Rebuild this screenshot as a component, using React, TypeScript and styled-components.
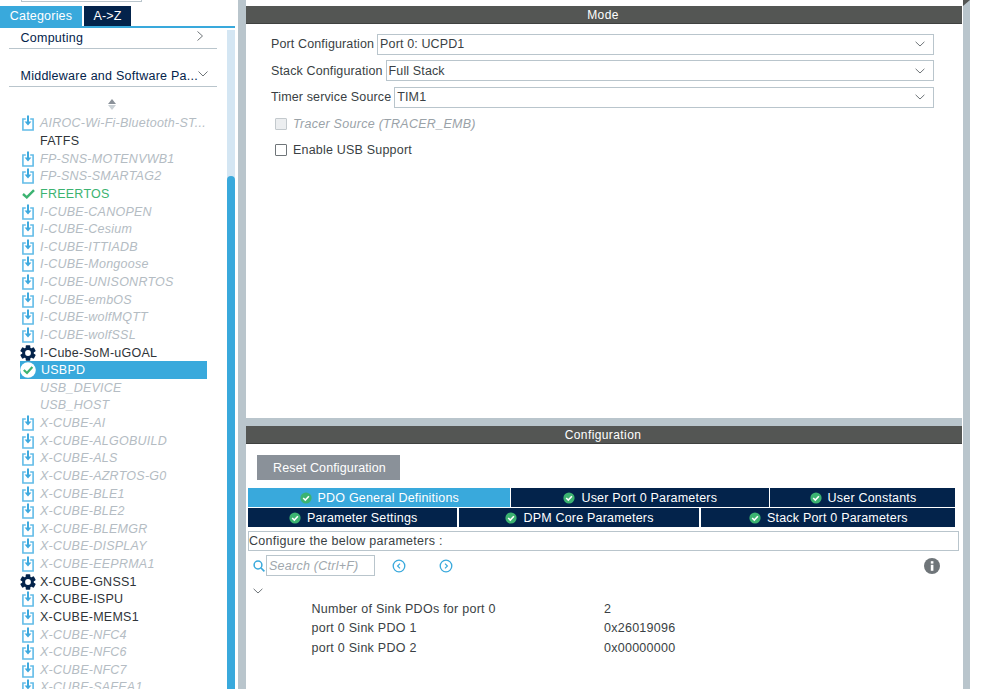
import React from "react";
import styled, { createGlobalStyle } from "styled-components";

const Global = createGlobalStyle`
  html, body { margin: 0; padding: 0; background: #fff; overflow: hidden; }
  body { font-family: "Liberation Sans", Arial, sans-serif; font-size: 12.5px; color: #3a3f44; }
`;

const Page = styled.div`
  display: flex;
  width: 999px;
  height: 689px;
  overflow: hidden;
`;

/* Sidebar */
const Sidebar = styled.aside`
  width: 238px;
  flex: none;
  display: flex;
  flex-direction: column;
`;
const TopField = styled.div`
  height: 1px;
  width: 119px;
  margin: 0 0 4px 21px;
  border: 1px solid #b9c5cc;
  border-top: 0;
`;
const Tabs = styled.div`
  display: flex;
  gap: 2px;
  height: 20px;
`;
const Tab = styled.div<{ $active?: boolean; $w: number }>`
  width: ${(p) => p.$w}px;
  background: ${(p) => (p.$active ? "#39a9dc" : "#03234b")};
  color: #fff;
  font-size: 12.5px;
  letter-spacing: 0.2px;
  display: flex;
  align-items: center;
  justify-content: center;
`;
const BlueLine = styled.div`
  height: 2px;
  width: 235px;
  background: #39a9dc;
`;
const SideBody = styled.div`
  flex: 1;
  display: flex;
  min-height: 0;
  padding-top: 2px;
`;
const SideContent = styled.div`
  width: 227px;
  flex: none;
  overflow: hidden;
`;
const Track = styled.div`
  width: 8px;
  flex: none;
  background: #d4e6f3;
  display: flex;
  flex-direction: column;
`;
const Thumb = styled.div`
  margin-top: 146px;
  flex: 1;
  background: #39a9dc;
  border-radius: 4px 4px 0 0;
`;
const Accordion = styled.div<{ $h: number }>`
  box-sizing: border-box;
  height: ${(p) => p.$h}px;
  width: 208px;
  margin-left: 9px;
  padding: 0 12px 0 11.5px;
  border-bottom: 1.5px solid #b9c5cc;
  display: flex;
  align-items: flex-end;
  justify-content: space-between;
  color: #03234b;
  font-size: 12.5px;
  letter-spacing: 0.25px;
  line-height: 19px;
  white-space: nowrap;
`;
const AccordionIcon = styled.svg`
  flex: none;
  width: 10px;
  height: 10px;
  margin-bottom: 7px;
`;
const SortMark = styled.div`
  height: 17px;
  margin-top: 9px;
  padding-left: 108px;
  display: flex;
  align-items: center;
`;
const List = styled.div`
  display: flex;
  flex-direction: column;
  margin-top: 1.6px;
`;
const Row = styled.div<{ $kind: string; $selected?: boolean }>`
  flex: none;
  box-sizing: border-box;
  height: 17.625px;
  width: 187px;
  margin-left: 20px;
  display: flex;
  align-items: center;
  white-space: nowrap;
  letter-spacing: 0.25px;
  font-size: 12.5px;
  background: ${(p) => (p.$selected ? "#39a9dc" : "transparent")};
  color: ${(p) =>
    p.$selected ? "#fff" : p.$kind === "muted" ? "#b4bcc3" : p.$kind === "green" ? "#3cb371" : "#2f3439"};
  font-style: ${(p) => (p.$kind === "muted" ? "italic" : "normal")};
`;
const RowIcon = styled.span<{ $selected?: boolean }>`
  width: 16px;
  height: 16px;
  margin-right: ${(p) => (p.$selected ? 5 : 4)}px;
  flex: none;
  display: flex;
  align-items: center;
  justify-content: center;
`;

const Sash = styled.div`
  width: 8px;
  flex: none;
  background: #b9c5cc;
`;

/* Main */
const Main = styled.main`
  width: 716px;
  flex: none;
  display: flex;
  flex-direction: column;
`;
const ModePane = styled.section`
  height: 418px;
  flex: none;
  padding-top: 6px;
  box-sizing: border-box;
`;
const HSash = styled.div`
  height: 8px;
  flex: none;
  background: #b9c5cc;
`;
const ConfigPane = styled.section`
  flex: 1;
  min-height: 0;
`;
const PaneHeader = styled.div`
  height: 17px;
  padding-right: 2px;
  background: #545654;
  border-bottom: 1px solid #3f4140;
  color: #fff;
  font-size: 12px;
  letter-spacing: 0.4px;
  display: flex;
  align-items: center;
  justify-content: center;
`;
const Form = styled.div`
  display: flex;
  flex-direction: column;
  padding: 9.5px 28px 0 25px;
`;
const FormRow = styled.div`
  display: flex;
  align-items: center;
  height: 21px;
  margin-bottom: 5.5px;
  white-space: nowrap;
  letter-spacing: 0.13px;
`;
const SelectBox = styled.div`
  flex: 1;
  margin-left: 3px;
  height: 21px;
  box-sizing: border-box;
  border: 1px solid #b9c5cc;
  padding: 0 8px 0 2px;
  display: flex;
  align-items: center;
  justify-content: space-between;
`;
const CheckRow = styled.div<{ $disabled?: boolean }>`
  display: flex;
  align-items: center;
  height: 21px;
  padding-left: 4px;
  margin-bottom: 5.5px;
  gap: 6px;
  letter-spacing: ${(p) => (p.$disabled ? 0.28 : 0.2)}px;
  color: ${(p) => (p.$disabled ? "#9aa2a8" : "#3a3f44")};
  font-style: ${(p) => (p.$disabled ? "italic" : "normal")};
`;
const CheckBox = styled.span<{ $disabled?: boolean }>`
  width: 12px;
  height: 12px;
  box-sizing: border-box;
  border: 1px solid ${(p) => (p.$disabled ? "#c3c9cd" : "#6f7579")};
  border-radius: 1px;
  background: ${(p) => (p.$disabled ? "#eceef0" : "#fff")};
`;

const ConfigBody = styled.div`
  display: flex;
  flex-direction: column;
`;
const ResetButton = styled.button`
  align-self: flex-start;
  width: 143px;
  height: 25px;
  margin: 11px 0 8px 11px;
  padding: 0 0 0 2px;
  border: 0;
  background: #8a9199;
  color: #fff;
  font-family: inherit;
  font-size: 12.5px;
  letter-spacing: 0.12px;
`;
const TabRow = styled.div<{ $mb?: number }>`
  display: flex;
  gap: 1.5px;
  width: 707px;
  height: 19px;
  margin: 0 0 ${(p) => p.$mb ?? 1}px 2px;
`;
const ConfTab = styled.div<{ $w: number; $active?: boolean }>`
  flex: ${(p) => p.$w} 0 0;
  box-sizing: border-box;
  padding-left: 1px;
  background: ${(p) => (p.$active ? "#39a9dc" : "#03234b")};
  color: #fff;
  font-size: 12.5px;
  letter-spacing: 0.2px;
  display: flex;
  align-items: center;
  justify-content: center;
  gap: 6px;
`;
const DescBox = styled.div`
  box-sizing: border-box;
  width: 711px;
  height: 20px;
  margin: 4px 0 4px 2px;
  border: 1px solid #b9c5cc;
  letter-spacing: 0.28px;
  display: flex;
  align-items: center;
`;
const SearchRow = styled.div`
  display: flex;
  align-items: center;
  height: 21px;
  padding-left: 7px;
`;
const SearchInput = styled.div`
  box-sizing: border-box;
  width: 109px;
  height: 21px;
  margin-left: 1px;
  border: 1px solid #b9c5cc;
  padding-left: 2px;
  color: #a0a7ad;
  font-style: italic;
  letter-spacing: 0.25px;
  display: flex;
  align-items: center;
`;
const NavIcon = styled.svg<{ $ml: number }>`
  width: 14px;
  height: 14px;
  margin-left: ${(p) => p.$ml}px;
  flex: none;
`;
const InfoIcon = styled.svg`
  width: 16px;
  height: 16px;
  margin-left: 471px;
  flex: none;
`;
const Chevron = styled.div`
  padding: 7px 0 0 7px;
  height: 13px;
`;
const ParamTable = styled.div`
  margin-top: 3px;
  display: flex;
  flex-direction: column;
`;
const ParamRow = styled.div`
  display: grid;
  grid-template-columns: 292.5px 1fr;
  height: 19.5px;
  padding-left: 65.5px;
  align-items: center;
  letter-spacing: 0.26px;
`;

/* Right edge */
const RightBar = styled.div`
  width: 7px;
  margin-left: 1px;
  flex: none;
  background: #b9c5cc;
`;
const RightBarCap = styled.div`
  height: 6px;
  background: #545654;
  clip-path: polygon(0 0, 100% 0, 0 100%);
`;

/* Icons */
const ChevDown = ({ s = 10, c = "#6f7579" }: { s?: number; c?: string }) => (
  <svg width={s} height={s * 0.6} viewBox="0 0 10 6" fill="none">
    <path d="M0.6 0.8 L5 5 L9.4 0.8" stroke={c} strokeWidth="1" />
  </svg>
);
const Download = () => (
  <svg width="12" height="16" viewBox="0 0 12 16" fill="none">
    <path d="M3.8 4 H0.9 V15 H11.1 V4 H8.2" stroke="#62bce8" strokeWidth="1.6" />
    <path d="M6 0.5 V7" stroke="#3ea9de" strokeWidth="2" />
    <path d="M2.6 6.4 H9.4 L6 10.4 Z" fill="#3ea9de" />
  </svg>
);
const Gear = () => (
  <svg width="16" height="16" viewBox="0 0 16 16">
    <g fill="#03234b">
      {[0, 60, 120].map((a) => (
        <rect key={a} x="5.7" y="0.2" width="4.6" height="15.6" rx="0.8" transform={`rotate(${a} 8 8)`} />
      ))}
      <circle cx="8" cy="8" r="5.8" />
    </g>
    <circle cx="8" cy="8" r="2.9" fill="#fff" />
  </svg>
);
const Tick = () => (
  <svg width="13" height="10" viewBox="0 0 13 10" fill="none">
    <path d="M1 5 L4.8 8.4 L12 1.2" stroke="#3cb371" strokeWidth="2.4" />
  </svg>
);
const BigCheck = () => (
  <svg width="16" height="16" viewBox="0 0 16 16" fill="none">
    <circle cx="8" cy="8" r="7.8" fill="#fff" />
    <path d="M3.8 8 L7 11 L12.4 5" stroke="#3cb371" strokeWidth="2.2" />
  </svg>
);
const TabCheck = () => (
  <svg width="12" height="12" viewBox="0 0 12 12" fill="none">
    <circle cx="6" cy="6" r="5.6" fill="#3cb371" />
    <path d="M3.2 6 L5.3 8 L8.9 4.2" stroke="#fff" strokeWidth="1.6" />
  </svg>
);

type Item = { t: string; k: "muted" | "plain" | "green" | "sel"; i?: "d" | "g" | "t" | "b" };
const items: Item[] = [
  { t: "AIROC-Wi-Fi-Bluetooth-ST...", k: "muted", i: "d" },
  { t: "FATFS", k: "plain" },
  { t: "FP-SNS-MOTENVWB1", k: "muted", i: "d" },
  { t: "FP-SNS-SMARTAG2", k: "muted", i: "d" },
  { t: "FREERTOS", k: "green", i: "t" },
  { t: "I-CUBE-CANOPEN", k: "muted", i: "d" },
  { t: "I-CUBE-Cesium", k: "muted", i: "d" },
  { t: "I-CUBE-ITTIADB", k: "muted", i: "d" },
  { t: "I-CUBE-Mongoose", k: "muted", i: "d" },
  { t: "I-CUBE-UNISONRTOS", k: "muted", i: "d" },
  { t: "I-CUBE-embOS", k: "muted", i: "d" },
  { t: "I-CUBE-wolfMQTT", k: "muted", i: "d" },
  { t: "I-CUBE-wolfSSL", k: "muted", i: "d" },
  { t: "I-Cube-SoM-uGOAL", k: "plain", i: "g" },
  { t: "USBPD", k: "sel", i: "b" },
  { t: "USB_DEVICE", k: "muted" },
  { t: "USB_HOST", k: "muted" },
  { t: "X-CUBE-AI", k: "muted", i: "d" },
  { t: "X-CUBE-ALGOBUILD", k: "muted", i: "d" },
  { t: "X-CUBE-ALS", k: "muted", i: "d" },
  { t: "X-CUBE-AZRTOS-G0", k: "muted", i: "d" },
  { t: "X-CUBE-BLE1", k: "muted", i: "d" },
  { t: "X-CUBE-BLE2", k: "muted", i: "d" },
  { t: "X-CUBE-BLEMGR", k: "muted", i: "d" },
  { t: "X-CUBE-DISPLAY", k: "muted", i: "d" },
  { t: "X-CUBE-EEPRMA1", k: "muted", i: "d" },
  { t: "X-CUBE-GNSS1", k: "plain", i: "g" },
  { t: "X-CUBE-ISPU", k: "plain", i: "d" },
  { t: "X-CUBE-MEMS1", k: "plain", i: "d" },
  { t: "X-CUBE-NFC4", k: "muted", i: "d" },
  { t: "X-CUBE-NFC6", k: "muted", i: "d" },
  { t: "X-CUBE-NFC7", k: "muted", i: "d" },
  { t: "X-CUBE-SAFEA1", k: "muted", i: "d" },
];
const iconFor = (i?: Item["i"]) =>
  i === "d" ? <Download /> : i === "g" ? <Gear /> : i === "t" ? <Tick /> : i === "b" ? <BigCheck /> : null;

const formRows = [
  ["Port Configuration", "Port 0: UCPD1"],
  ["Stack Configuration", "Full Stack"],
  ["Timer service Source", "TIM1"],
];
const tabs1 = [
  { t: "PDO General Definitions", w: 262, a: true },
  { t: "User Port 0 Parameters", w: 258 },
  { t: "User Constants", w: 185 },
];
const tabs2 = [
  { t: "Parameter Settings", w: 209 },
  { t: "DPM Core Parameters", w: 240 },
  { t: "Stack Port 0 Parameters", w: 254 },
];
const params = [
  ["Number of Sink PDOs for port 0", "2"],
  ["port 0 Sink PDO 1", "0x26019096"],
  ["port 0 Sink PDO 2", "0x00000000"],
];

export default function App() {
  return (
    <Page>
      <Global />
      <Sidebar>
        <TopField />
        <Tabs>
          <Tab $active $w={82}>Categories</Tab>
          <Tab $w={47}>A-&gt;Z</Tab>
        </Tabs>
        <BlueLine />
        <SideBody>
          <SideContent>
            <Accordion $h={19}>
              <span>Computing</span>
              <AccordionIcon viewBox="0 0 10 10" fill="none">
                <path d="M2.5 0.5 L7.5 5 L2.5 9.5" stroke="#6f7579" />
              </AccordionIcon>
            </Accordion>
            <Accordion $h={38}>
              <span>Middleware and Software Pa...</span>
              <AccordionIcon viewBox="0 0 10 10" fill="none">
                <path d="M0.5 2.5 L5 7 L9.5 2.5" stroke="#6f7579" />
              </AccordionIcon>
            </Accordion>
            <SortMark>
              <svg width="8" height="11" viewBox="0 0 8 11">
                <path d="M4 0 L8 5 H0 Z" fill="#8a9199" />
                <path d="M4 11 L8 6 H0 Z" fill="#c9d0d5" />
              </svg>
            </SortMark>
            <List>
              {items.map((it) => (
                <Row key={it.t} $kind={it.k} $selected={it.k === "sel"}>
                  <RowIcon $selected={it.k === "sel"}>{iconFor(it.i)}</RowIcon>
                  {it.t}
                </Row>
              ))}
            </List>
          </SideContent>
          <Track>
            <Thumb />
          </Track>
        </SideBody>
      </Sidebar>
      <Sash />
      <Main>
        <ModePane>
          <PaneHeader>Mode</PaneHeader>
          <Form>
            {formRows.map(([l, v]) => (
              <FormRow key={l}>
                {l}
                <SelectBox>
                  {v}
                  <ChevDown />
                </SelectBox>
              </FormRow>
            ))}
            <CheckRow $disabled>
              <CheckBox $disabled />
              Tracer Source (TRACER_EMB)
            </CheckRow>
            <CheckRow>
              <CheckBox />
              Enable USB Support
            </CheckRow>
          </Form>
        </ModePane>
        <HSash />
        <ConfigPane>
          <PaneHeader>Configuration</PaneHeader>
          <ConfigBody>
            <ResetButton>Reset Configuration</ResetButton>
            <TabRow>
              {tabs1.map((t) => (
                <ConfTab key={t.t} $w={t.w} $active={t.a}>
                  <TabCheck />
                  {t.t}
                </ConfTab>
              ))}
            </TabRow>
            <TabRow $mb={0}>
              {tabs2.map((t) => (
                <ConfTab key={t.t} $w={t.w}>
                  <TabCheck />
                  {t.t}
                </ConfTab>
              ))}
            </TabRow>
            <DescBox>Configure the below parameters :</DescBox>
            <SearchRow>
              <svg width="12" height="12" viewBox="0 0 12 12" fill="none">
                <circle cx="5" cy="5" r="3.9" stroke="#39a9dc" strokeWidth="1.5" />
                <path d="M8 8 L11.4 11.4" stroke="#39a9dc" strokeWidth="1.7" />
              </svg>
              <SearchInput>Search (Ctrl+F)</SearchInput>
              <NavIcon $ml={17} viewBox="0 0 14 14" fill="none">
                <circle cx="7" cy="7" r="5.8" stroke="#39a9dc" strokeWidth="1.3" />
                <path d="M8 4.6 L5.6 7 L8 9.4" stroke="#39a9dc" strokeWidth="1.2" />
              </NavIcon>
              <NavIcon $ml={33} viewBox="0 0 14 14" fill="none">
                <circle cx="7" cy="7" r="5.8" stroke="#39a9dc" strokeWidth="1.3" />
                <path d="M6 4.6 L8.4 7 L6 9.4" stroke="#39a9dc" strokeWidth="1.2" />
              </NavIcon>
              <InfoIcon viewBox="0 0 16 16">
                <circle cx="8" cy="8" r="8" fill="#6f7579" />
                <rect x="6.8" y="6.8" width="2.6" height="6" fill="#fff" />
                <rect x="6.8" y="3.2" width="2.6" height="2.4" fill="#fff" />
              </InfoIcon>
            </SearchRow>
            <Chevron>
              <ChevDown />
            </Chevron>
            <ParamTable>
              {params.map(([l, v]) => (
                <ParamRow key={l}>
                  <span>{l}</span>
                  <span>{v}</span>
                </ParamRow>
              ))}
            </ParamTable>
          </ConfigBody>
        </ConfigPane>
      </Main>
      <RightBar>
        <RightBarCap />
      </RightBar>
    </Page>
  );
}
